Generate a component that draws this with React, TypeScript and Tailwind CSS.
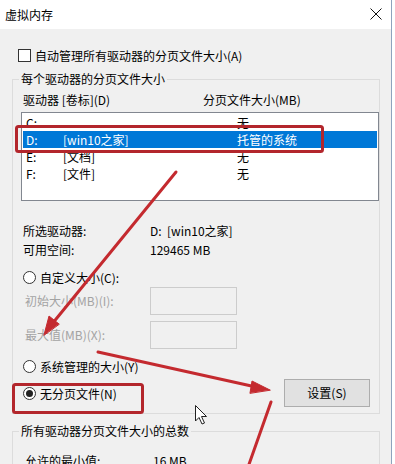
import React from 'react';

const font = { fontFamily: '"Noto Sans CJK SC", "Noto Sans", sans-serif' };

type Drive = { letter: string; label: string; size: string; selected?: boolean };

const drives: Drive[] = [
  { letter: 'C:', label: '', size: '无' },
  { letter: 'D:', label: '[win10之家]', size: '托管的系统', selected: true },
  { letter: 'E:', label: '[文档]', size: '无' },
  { letter: 'F:', label: '[文件]', size: '无' },
];

function Radio({ checked }: { checked?: boolean }) {
  return (
    <span className="w-[13px] h-[13px] rounded-full border border-[#333] bg-white flex items-center justify-center shrink-0">
      {checked && <span className="w-[7px] h-[7px] rounded-full bg-[#222]" />}
    </span>
  );
}

function Overlay() {
  const red = '#c42a2f';
  return (
    <svg className="absolute inset-0 pointer-events-none" width="395" height="464" viewBox="0 0 395 464">
      <rect x="16.5" y="126.5" width="306" height="25" rx="2" fill="none" stroke="#b3262c" strokeWidth="3" />
      <rect x="13.5" y="384.5" width="129" height="28" rx="2" fill="none" stroke="#b3262c" strokeWidth="3" />
      <g stroke={red} strokeWidth="3" strokeLinecap="round" fill={red}>
        <line x1="176" y1="172" x2="52" y2="324" />
        <polygon points="44,335 49,316 59,324" strokeWidth="1" />
        <line x1="98" y1="352" x2="256" y2="387" />
        <polygon points="270,390 252,381 250,393" strokeWidth="1" />
        <line x1="271" y1="402" x2="247" y2="470" />
      </g>
      <path
        d="M195.5 405.5 L195.5 421 L199 417.5 L202 424 L204.5 423 L201.5 416.5 L206.5 416.5 Z"
        fill="#fff"
        stroke="#222"
        strokeWidth="1"
        strokeLinejoin="round"
      />
    </svg>
  );
}

export default function App() {
  return (
    <div className="relative w-[395px] h-[464px] overflow-hidden bg-white text-[12px] text-black" style={font}>
      <div className="w-[392px] h-full flex flex-col border-r border-[#8ea3bd]">
        <div className="h-[29px] bg-white flex items-center justify-between pl-[5px] pr-[9px] shrink-0">
          <span className="leading-[16px]">虚拟内存</span>
          <svg width="12" height="12" viewBox="0 0 12 12" className="mt-[-2px]">
            <path d="M0.5 0.5 L11.5 11.5 M11.5 0.5 L0.5 11.5" stroke="#111" strokeWidth="1" />
          </svg>
        </div>

        <div className="flex-1 bg-[#f0f0f0] pl-[12px] pr-[11px]">
          <label className="flex items-center gap-[4px] pl-[6px] mt-[20px] h-[13px]">
            <span className="w-[13px] h-[13px] border border-[#333] bg-white shrink-0" />
            <span className="leading-[16px]">自动管理所有驱动器的分页文件大小(A)</span>
          </label>

          <fieldset className="mt-[9px] border border-[#dcdcdc] pb-[6px]">
            <legend className="ml-[6px] px-[2px] leading-[16px]">每个驱动器的分页文件大小</legend>
            <div className="flex mt-[5px] h-[16px] leading-[16px] pl-[10px]">
              <span className="w-[180px]">驱动器 [卷标](D)</span>
              <span>分页文件大小(MB)</span>
            </div>
            <div className="ml-[8px] mt-[4px] w-[358px] h-[89px] bg-white border border-[#828790] overflow-hidden pt-[1px] px-[1px]">
              {drives.map((d) => (
                <div
                  key={d.letter}
                  className={`flex h-[17px] leading-[17px] pl-[3px] ${d.selected ? 'bg-[#0078d7] text-white' : ''}`}
                >
                  <span className="w-[37px]">{d.letter}</span>
                  <span className="w-[174px]">{d.label}</span>
                  <span>{d.size}</span>
                </div>
              ))}
            </div>

            <div className="mt-[20px] pl-[10px]">
              <div className="flex h-[19px] leading-[19px]">
                <span className="w-[127px]">所选驱动器:</span>
                <span>D:&nbsp;&nbsp;[win10之家]</span>
              </div>
              <div className="flex h-[19px] leading-[19px]">
                <span className="w-[127px]">可用空间:</span>
                <span>129465 MB</span>
              </div>
            </div>

            <div className="mt-[9px] pl-[10px] flex items-center gap-[4px] h-[19px]">
              <Radio />
              <span className="leading-[19px]">自定义大小(C):</span>
            </div>

            <div className="pl-[12px] text-[#a3a3a3]">
              <div className="flex items-center h-[28px]">
                <span className="w-[125px]">初始大小(MB)(I):</span>
                <span className="w-[87px] h-[28px] border border-[#cccccc] bg-[#f0f0f0]" />
              </div>
              <div className="flex items-center h-[28px] mt-[6px]">
                <span className="w-[125px]">最大值(MB)(X):</span>
                <span className="w-[87px] h-[28px] border border-[#cccccc] bg-[#f0f0f0]" />
              </div>
            </div>

            <div className="mt-[8px] pl-[10px] flex items-center gap-[4px] h-[19px]">
              <Radio />
              <span className="leading-[19px]">系统管理的大小(Y)</span>
            </div>

            <div className="mt-[3px] pl-[10px] pr-[9px] flex items-center justify-between h-[28px]">
              <div className="flex items-center gap-[4px]">
                <Radio checked />
                <span className="leading-[19px]">无分页文件(N)</span>
              </div>
              <button className="w-[86px] h-[28px] bg-[#e1e1e1] border border-[#adadad] leading-[16px]">
                设置(S)
              </button>
            </div>
          </fieldset>

          <fieldset className="mt-[9px] border border-[#dcdcdc] h-[60px]">
            <legend className="ml-[6px] px-[2px] leading-[16px]">所有驱动器分页文件大小的总数</legend>
            <div className="mt-[12px] pl-[12px] flex h-[19px] leading-[19px]">
              <span className="w-[128px]">允许的最小值:</span>
              <span>16 MB</span>
            </div>
          </fieldset>
        </div>
      </div>
      <Overlay />
    </div>
  );
}
